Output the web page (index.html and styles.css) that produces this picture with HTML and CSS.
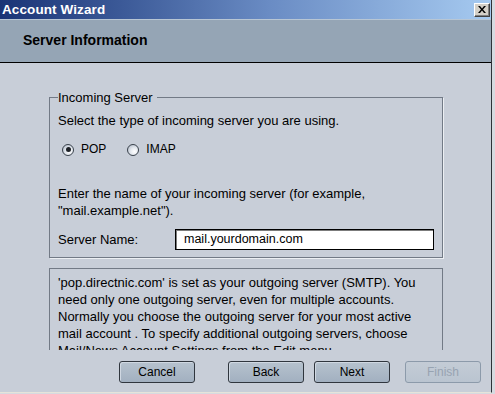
FILE: index.html
```html
<!DOCTYPE html>
<html>
<head>
<meta charset="utf-8">
<title>Account Wizard</title>
<link rel="stylesheet" href="styles.css">
</head>
<body>
<div class="window">
  <div class="titlebar">
    <span class="title">Account Wizard</span>
    <span class="close"><svg width="8" height="7" viewBox="0 0 8 7"><path d="M0 0h2l2 2.4L6 0h2L5 3.5 8 7H6L4 4.6 2 7H0l3-3.5z" fill="#000"/></svg></span>
  </div>
  <div class="header">Server Information</div>
  <div class="content">
    <fieldset class="group">
      <legend class="legend">Incoming Server</legend>
      <p class="line">Select the type of incoming server you are using.</p>
      <div class="radios">
        <span class="radio"><span class="dot checked"></span>POP</span>
        <span class="radio"><span class="dot"></span>IMAP</span>
      </div>
      <p class="line para">Enter the name of your incoming server (for example,<br>"mail.example.net").</p>
      <div class="field">
        <span class="field-label">Server Name:</span>
        <span class="input">mail.yourdomain.com</span>
      </div>
    </fieldset>
    <div class="note">
      <p class="line">'pop.directnic.com' is set as your outgoing server (SMTP). You<br>need only one outgoing server, even for multiple accounts.<br>Normally you choose the outgoing server for your most active<br>mail account . To specify additional outgoing servers, choose<br>Mail/News Account Settings from the Edit menu.</p>
    </div>
    <div class="buttons">
      <span class="btn btn-cancel">Cancel</span>
      <span class="btn btn-back">Back</span>
      <span class="btn btn-next">Next</span>
      <span class="btn btn-finish disabled">Finish</span>
    </div>
  </div>
</div>
</body>
</html>
```

FILE: styles.css
```css
html, body {
  margin: 0;
  padding: 0;
}
body {
  width: 495px;
  height: 394px;
  overflow: hidden;
  background: #d6dae0;
  font-family: "Liberation Sans", Arial, sans-serif;
  color: #000;
}
.window {
  width: 491px;
  height: 392px;
  border-right: 1px solid #2e3238;
  background: #c8ced8;
  border-bottom: 1px solid #e6e4da;
}
.titlebar {
  height: 19px;
  display: flex;
  align-items: center;
  justify-content: space-between;
  padding-left: 2px;
  background: linear-gradient(to right, #1a3476 0%, #3c5a98 25%, #6a8cc4 55%, #a6caf0 100%);
}
.title {
  color: #fff;
  font-weight: bold;
  font-size: 13.5px;
  line-height: 19px;
  letter-spacing: 0.1px;
}
.close {
  width: 14px;
  height: 12px;
  margin-right: 1px;
  display: flex;
  align-items: center;
  justify-content: center;
  background: #d4d0c8;
  border-top: 1px solid #fff;
  border-left: 1px solid #fff;
  border-right: 1px solid #404040;
  border-bottom: 1px solid #404040;
  box-shadow: inset -1px -1px 0 #808080;
}
.header {
  height: 42px;
  box-sizing: content-box;
  border-top: 1px solid #b8c6d4;
  border-bottom: 1px solid #000;
  background: #95a5b5;
  padding-left: 23px;
  font-weight: bold;
  font-size: 14px;
  line-height: 16px;
  padding-top: 0;
}
.header::before {
  content: "";
  display: block;
  height: 12px;
}
.content {
  padding-top: 27px;
}
.group {
  margin: 0 0 0 49px;
  width: 394px;
  box-sizing: border-box;
  border: 1px solid #727a86;
  box-shadow: 1px 1px 0 #eceff3;
  padding: 7px 8px 7px 8px;
  min-width: 0;
}
.legend {
  padding: 0 4px 0 0;
  margin-left: 0;
  font-size: 13px;
  line-height: 15px;
}
.line {
  margin: 0;
  font-size: 13px;
  line-height: 17px;
  white-space: nowrap;
}
.radios {
  display: flex;
  align-items: center;
  height: 17px;
  margin-top: 12px;
  margin-left: 4px;
}
.radio {
  display: flex;
  align-items: center;
  font-size: 12px;
  line-height: 17px;
  margin-right: 21px;
}
.dot {
  width: 12px;
  height: 12px;
  box-sizing: border-box;
  border-radius: 50%;
  border: 1px solid #3a424c;
  background: radial-gradient(circle at 65% 65%, #ffffff 0%, #e6eaf0 40%, #a8b2c0 100%);
  margin-right: 7px;
  display: flex;
  align-items: center;
  justify-content: center;
}
.dot.checked::after {
  content: "";
  width: 5px;
  height: 5px;
  border-radius: 50%;
  background: #1c2026;
}
.para {
  margin-top: 27px;
}
.field {
  display: flex;
  align-items: center;
  margin-top: 10px;
  height: 21px;
}
.field-label {
  width: 117px;
  font-size: 13px;
  line-height: 17px;
}
.input {
  flex: 1;
  height: 21px;
  box-sizing: border-box;
  border: 1px solid #000;
  box-shadow: inset 1px 1px 0 #7c7c7c;
  background: #fff;
  padding-left: 8px;
  font-size: 12.5px;
  line-height: 19px;
}
.note {
  margin: 10px 0 0 49px;
  width: 394px;
  height: 82px;
  box-sizing: border-box;
  border: 1px solid #727a86;
  border-bottom: none;
  padding: 5px 8px 0 8px;
  overflow: hidden;
}
.buttons {
  display: flex;
  margin-top: 11px;
}
.btn {
  width: 76px;
  height: 22px;
  box-sizing: border-box;
  border: 1px solid #30363e;
  border-radius: 3px;
  background: linear-gradient(to bottom, #b6c2ce 0%, #a2b0c0 100%);
  box-shadow: inset 1px 1px 0 #d0d8e2;
  display: flex;
  align-items: center;
  justify-content: center;
  font-size: 12px;
  line-height: 20px;
}
.btn-cancel { margin-left: 119px; }
.btn-back { margin-left: 33px; }
.btn-next { margin-left: 10px; }
.btn-finish { margin-left: 15px; }
.btn.disabled {
  border-color: #8c9aaa;
  color: #97a3b1;
  background: linear-gradient(to bottom, #c4ccd6 0%, #bac4d0 100%);
  box-shadow: none;
}
```
